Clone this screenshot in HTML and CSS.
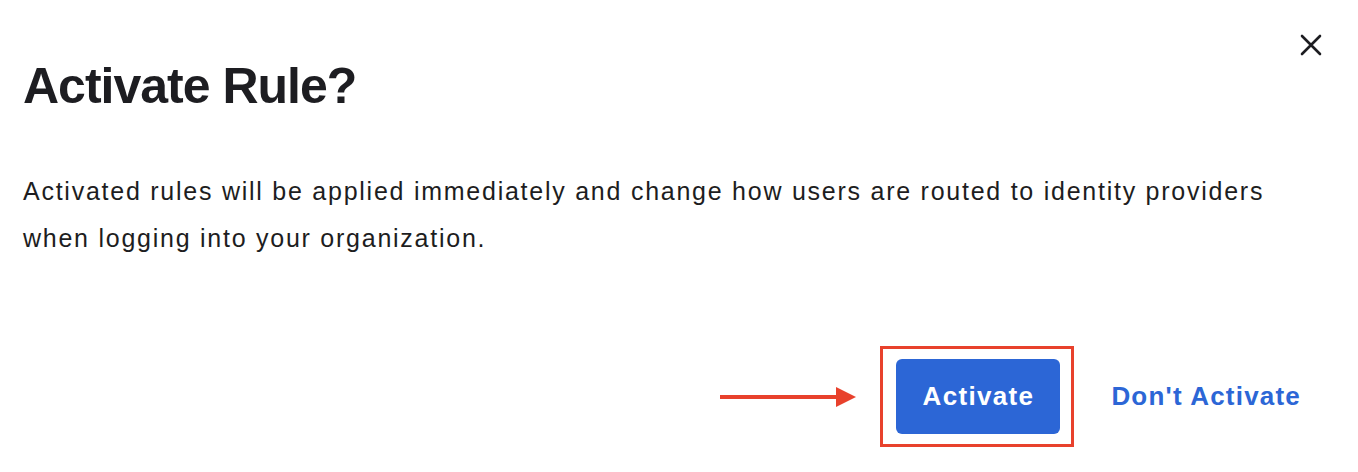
FILE: index.html
```html
<!DOCTYPE html>
<html lang="en">
<head>
<meta charset="utf-8">
<link rel="stylesheet" href="styles.css">
</head>
<body>
<div class="dialog">
  <div class="header">
    <h1 class="title">Activate Rule?</h1>
    <button class="close" aria-label="Close">
      <svg width="22" height="22" viewBox="0 0 22 22"><path d="M2 2 L20 20 M20 2 L2 20" stroke="#1d1d21" stroke-width="2.6" stroke-linecap="round"/></svg>
    </button>
  </div>
  <p class="body">Activated rules will be applied immediately and change how users are routed to identity providers when logging into your organization.</p>
  <div class="footer">
    <svg class="arrow" width="136" height="22" viewBox="0 0 136 22"><rect x="0" y="9" width="118" height="4" fill="#e8412c"/><polygon points="116,1 136,11 116,21" fill="#e8412c"/></svg>
    <div class="highlight">
      <button class="primary">Activate</button>
    </div>
    <button class="link">Don't Activate</button>
  </div>
</div>
</body>
</html>
```
FILE: styles.css
```css
html, body {
  margin: 0;
  padding: 0;
  background: #ffffff;
}
body {
  font-family: "Liberation Sans", Arial, sans-serif;
  color: #1d1d21;
}
.dialog {
  width: 1358px;
  height: 472px;
  box-sizing: border-box;
  padding: 28px 34px 0 23px;
  display: flex;
  flex-direction: column;
}
.header {
  display: flex;
  justify-content: space-between;
  align-items: flex-start;
}
.title {
  margin: 30px 0 0 0;
  font-size: 50px;
  line-height: 56px;
  font-weight: 700;
  letter-spacing: -1px;
}
.close {
  border: 0;
  background: none;
  padding: 0;
  margin-top: 6px;
  margin-right: 2px;
  width: 22px;
  height: 22px;
  display: flex;
}
.body {
  margin: 54px 0 0 0;
  max-width: 1290px;
  font-size: 25px;
  line-height: 47px;
  letter-spacing: 1.75px;
  color: #1d1d21;
}
.footer {
  margin-top: 84px;
  display: flex;
  justify-content: flex-end;
  align-items: center;
  padding-right: 23px;
}
.arrow {
  margin-right: 24px;
}
.highlight {
  border: 3px solid #e8412c;
  padding: 10px 11px 10px 13px;
  display: flex;
}
.primary {
  font-family: "Liberation Sans", Arial, sans-serif;
  width: 164px;
  height: 75px;
  border: 0;
  border-radius: 6px;
  background: #2c66d6;
  color: #ffffff;
  font-size: 26px;
  font-weight: 700;
  letter-spacing: 1.3px;
  padding: 0;
}
.link {
  font-family: "Liberation Sans", Arial, sans-serif;
  border: 0;
  background: none;
  padding: 0;
  margin-left: 37px;
  color: #2c66d6;
  font-size: 26px;
  font-weight: 700;
  letter-spacing: 1.2px;
}
```
